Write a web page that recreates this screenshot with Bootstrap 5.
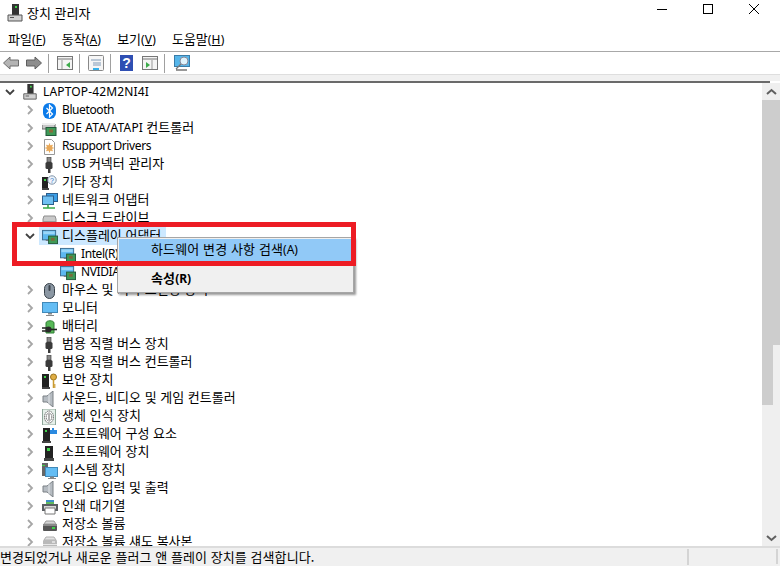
<!DOCTYPE html>
<html lang="ko">
<head>
<meta charset="utf-8">
<title>장치 관리자</title>
<link href="https://cdn.jsdelivr.net/npm/bootstrap@5.3.0/dist/css/bootstrap.min.css" rel="stylesheet">
<style>
html,body{height:100%;overflow:hidden}
body{background:#fff;color:#000;font-family:"Noto Sans CJK KR","Noto Sans",sans-serif;font-size:13px;line-height:18px}
.lat{font-family:"Noto Sans","Noto Sans CJK KR",sans-serif;font-size:12px;letter-spacing:-.4px}
.lat.caps{letter-spacing:.15px}
.win{width:780px;height:566px;position:relative;overflow:hidden}
.ttl{height:27px;padding-left:7px;padding-bottom:2px}
.ttl svg{width:16px;height:18px;margin-right:4px}
.wbtn{width:46px;height:25px}
.wgroup{margin-left:auto;margin-right:-2px}
.mbar{height:24px;padding-left:8px;gap:16px;border-bottom:1px solid #a8a8a8;margin-top:1px}
.mbar span{white-space:nowrap}
.mbar .lat{letter-spacing:.15px}
.tbar{height:22px;padding-left:3px}
.tbar svg{flex:none}
.tsep{width:1px;height:19px;background:#a0a0a0;flex:none}
.g6{margin-left:6px}.g7{margin-left:7px}.g8{margin-left:8px}.g9{margin-left:9px}
.strip{height:7px;background:#f0f0f0;border-top:1px solid #dedede}
.rule{height:2px;background:#6a6a6a;width:770px;flex:none}
.body-wrap{height:463px;min-height:0}
.tree{width:759px;overflow:hidden}
.trow{height:18px;white-space:nowrap;position:relative}
.trow svg{flex:none}
.chev{width:10px;height:10px;flex:none;margin-right:7px}
.lv0{padding-left:5px}
.lv1{padding-left:25px}
.lv2{padding-left:60px}
.ico{width:16px;height:16px;margin-right:4px;margin-top:2px}
.lv0 .ico{margin-right:5px;margin-top:0}
.lv2 .ico{margin-right:5px}
.trow > .sel{position:absolute;left:39px;top:0;width:127px;height:18px;background:#cce8ff}
.trow > span{position:relative}
.trow > span:not(.lat){margin-bottom:2px}
.trow > svg{position:relative}
.sbar{width:18px;background:#efefef;position:relative;flex:none}
.sarrow{height:17px}
.sthumb{height:245px;background:#cdcdcd}
.sthumb2{width:11px;height:60px;background:#cdcdcd}
.sarrow-b{margin-top:auto;height:17px}
.stat{height:20px;background:#f0f0f0;border-top:2px solid #dcdcdc;white-space:nowrap;overflow:hidden;font-size:13px}
.stat-text{width:689px;flex:none;overflow:hidden;border-right:2px solid #d4d4d4;height:16px;margin-top:1px;line-height:16px;letter-spacing:.06px}
.stat-end{margin-left:87px;width:2px;height:15px;background:#d4d4d4;margin-top:1px;flex:none}
.redbox{position:absolute;left:12px;top:222px;width:344px;height:44px;border:5px solid #ed1c24;z-index:5;pointer-events:none}
.ctx.dropdown-menu{position:absolute;left:117px;top:237px;width:237px;height:56px;min-width:0;padding:1px;margin:0;background:#f0f0f0;border:1px solid #a6a6a6;border-radius:0;box-shadow:2px 2px 2px rgba(0,0,0,.4);z-index:4;font-size:13px}
.ctx .dropdown-item{padding:0 0 0 32px;height:23px;line-height:20px;color:#000;letter-spacing:.12px}
.ctx .dropdown-item .lat{letter-spacing:0}
.ctx .dropdown-item.active{background:#91c9f7;color:#000}
.ctx .dropdown-item.strong{font-weight:700;height:24px;line-height:18px}
.ctx .dropdown-divider{margin:3px 1px;border-color:#d7d7d7;opacity:1}
</style>
</head>
<body>
<svg width="0" height="0" class="position-absolute">
<defs>
<symbol id="i-pc" viewBox="0 0 16 18"><rect x="5" y="0" width="7" height="11" fill="#333"/><rect x="8" y="2" width="2" height="2" fill="#3fd04a"/><path d="M1 11h14v6H1z" fill="#d2d2d2" stroke="#555"/><rect x="3" y="13" width="4" height="1" fill="#555"/></symbol>
<symbol id="i-bt" viewBox="0 0 16 16"><rect x="1" y="0" width="13" height="16" rx="6" fill="#0b7bea"/><path d="M4.500 5l6 6-3 3V2l3 3-6 6" fill="none" stroke="#fff" stroke-width="1.200"/></symbol>
<symbol id="i-ide" viewBox="0 0 16 16"><path d="M0 3h13v5H0z" fill="#c8c8c8" stroke="#666"/><path d="M0 2h13v2H0z" fill="#eee"/><rect x="4" y="6.500" width="10" height="8" fill="#3e9a57" stroke="#22593a"/><rect x="7" y="8.500" width="4" height="3" fill="#8a6a3a"/></symbol>
<symbol id="i-rs" viewBox="0 0 16 16"><path d="M2.500 .5h7l3 3v12h-10z" fill="#fff" stroke="#999"/><circle cx="7.500" cy="9" r="3" fill="#e8a858"/><path d="M7.500 4.500v9M3.300 9h8.400M4.500 6l6 6M10.500 6l-6 6" stroke="#e8a858" stroke-width="1.200"/></symbol>
<symbol id="i-usb" viewBox="0 0 16 16"><path d="M5 0h4v5H5z" fill="#888" stroke="#444" stroke-width=".7"/><rect x="3.500" y="5" width="7" height="7" rx="1.500" fill="#3a3a3a"/><rect x="6" y="12" width="2.500" height="4" fill="#3a3a3a"/></symbol>
<symbol id="i-oth" viewBox="0 0 16 16"><path d="M0 2h6v11H0z" fill="#222"/><rect x="2" y="4" width="2" height="2" fill="#3fd04a"/><path d="M-1 13h8v2H-1z" fill="#444"/><circle cx="10" cy="5" r="4.200" fill="#eef4fb" stroke="#7f93a8"/><text x="10" y="7.600" font-size="7" text-anchor="middle" fill="#2a70c0" font-family="Liberation Sans">?</text></symbol>
<symbol id="i-net" viewBox="0 0 16 16"><rect x="4.500" y=".5" width="11" height="8" fill="#3b9ee6" stroke="#2c5e8c"/><rect x=".5" y="3" width="11" height="8.500" fill="#6fc0f2" stroke="#2c5e8c"/><path d="M6 11.500v2M1 15h12M6 13v2" stroke="#3aa94a" stroke-width="1.600"/></symbol>
<symbol id="i-dsk" viewBox="0 0 16 16"><path d="M1 8l1-3h11l1 3v5H1z" fill="#c9c9c9" stroke="#8e8e8e"/><path d="M1 10h13v3H1z" fill="#9a9a9a"/></symbol>
<symbol id="i-dpy" viewBox="0 0 17 16"><rect x=".5" y="1" width="14" height="10" fill="#5db8f0" stroke="#3a6c92"/><rect x="1.500" y="2" width="12" height="3" fill="#9ad6f8"/><path d="M4 11h6v1H4z" fill="#666"/><rect x="7" y="7" width="9.500" height="8" fill="#3e9a57" stroke="#22593a"/><rect x="9.500" y="9" width="4" height="3" fill="#7a6a3a"/></symbol>
<symbol id="i-mou" viewBox="0 0 16 16"><rect x="2.500" y=".5" width="10" height="15" rx="5" fill="#8b97a3" stroke="#39424a"/><rect x="6.500" y="2" width="2" height="6" rx="1" fill="#3c444c"/></symbol>
<symbol id="i-mon" viewBox="0 0 16 16"><rect x=".5" y="1.500" width="15" height="10" fill="#64bdf4" stroke="#4189b8"/><path d="M6 12h4v1.500H6zM4 14h8v1H4z" fill="#888"/></symbol>
<symbol id="i-bat" viewBox="0 0 16 16"><path d="M4 4c0-3 8-3 8 0v10H4z" fill="#58b958" stroke="#2f7d34"/><path d="M0 9h5M0 12h5" stroke="#222" stroke-width="1.300"/><circle cx="6.500" cy="10.500" r="3" fill="#2a2a2a"/><path d="M9 10.500h6" stroke="#222" stroke-width="1.600"/></symbol>
<symbol id="i-sec" viewBox="0 0 16 16"><path d="M0 1h7v13H0z" fill="#222"/><rect x="2" y="3" width="2" height="2" fill="#3fd04a"/><path d="M-1 14h9v2H-1z" fill="#444"/><circle cx="11.500" cy="4" r="3" fill="#e0ae45" stroke="#9a7420"/><path d="M11.500 6v9M11.500 12h2M11.500 14h2" stroke="#c99a30" stroke-width="1.500"/></symbol>
<symbol id="i-snd" viewBox="0 0 16 16"><path d="M1 5h4l6-5v16l-6-5H1z" fill="#b6bcc2" stroke="#7a8085"/><path d="M7 2.500v11" stroke="#e4e7ea"/></symbol>
<symbol id="i-bio" viewBox="0 0 16 16"><rect x=".5" y="0" width="13" height="16" fill="#e6f0ea" stroke="#8fa79a"/><ellipse cx="7" cy="8" rx="4.500" ry="6" fill="#fff" stroke="#666" stroke-dasharray="1.500 .5"/><ellipse cx="7" cy="8" rx="2.800" ry="4" fill="none" stroke="#666" stroke-dasharray="1.500 .5"/><path d="M7 5v6" stroke="#666"/></symbol>
<symbol id="i-swc" viewBox="0 0 16 16"><path d="M1 1h7v13H1z" fill="#222"/><rect x="3" y="3" width="2" height="2" fill="#3fd04a"/><path d="M0 14h9v2H0z" fill="#444"/><path d="M8 3h2V1h2v2h3v4H8z" fill="#2a8ae0"/></symbol>
<symbol id="i-swd" viewBox="0 0 16 16"><path d="M3 1h8v12H3z" fill="#222"/><rect x="5" y="3" width="3" height="3" fill="#3fd04a"/><path d="M2 13h10v3H2z" fill="#444"/></symbol>
<symbol id="i-sys" viewBox="0 0 16 16"><path d="M-1 0h7v13h-7z" fill="#666"/><rect x="0" y="2" width="3" height="1" fill="#3fd04a"/><rect x="3.500" y="4.500" width="12" height="9" fill="#64bdf4" stroke="#4189b8"/><path d="M8 13.500h4V15H8zM6 15h8v1H6z" fill="#888"/></symbol>
<symbol id="i-prn" viewBox="0 0 16 16"><path d="M4 1h8v5H4z" fill="#3d8ec9"/><path d="M0 5h16v7H0z" fill="#5b5f63"/><rect x="4" y="3" width="8" height="2" fill="#5fb85f"/><path d="M2 7h12v3H2z" fill="#d8d8d8"/><path d="M3 9h10v6H3z" fill="#fff" stroke="#777"/></symbol>
<symbol id="i-sto" viewBox="0 0 16 16"><path d="M2 7l2-3h8l2 3z" fill="#d5d5d5" stroke="#9a9a9a"/><rect x="1" y="7" width="14" height="7" rx="1" fill="#555"/><rect x="1" y="7" width="14" height="2" fill="#8a8a8a"/><rect x="10" y="10" width="3" height="2" fill="#3fd04a"/></symbol>
<symbol id="i-sha" viewBox="0 0 16 16"><path d="M2 5l2-3h8l2 3z" fill="#e2e2e2" stroke="#b0b0b0"/><rect x="1" y="5" width="14" height="10" rx="1" fill="#b9b9b9"/><rect x="1" y="9" width="14" height="1" fill="#e8e8e8"/><rect x="10" y="6" width="3" height="2" fill="#ddd"/></symbol>
<symbol id="c-r" viewBox="0 0 10 10"><path d="M3 1l4 4-4 4" fill="none" stroke="#a6a6a6" stroke-width="1.800"/></symbol>
<symbol id="c-d" viewBox="0 0 10 10"><path d="M1 3l4 4 4-4" fill="none" stroke="#404040" stroke-width="1.800"/></symbol>
</defs>
</svg>

<div class="win d-flex flex-column">
  <div class="ttl d-flex align-items-center">
    <svg><use href="#i-pc"/></svg>
    <span>장치 관리자</span>
    <div class="wgroup d-flex">
      <div class="wbtn d-flex align-items-center justify-content-center"><svg width="10" height="10"><path d="M0 5.500h10" stroke="#000"/></svg></div>
      <div class="wbtn d-flex align-items-center justify-content-center"><svg width="10" height="10"><rect x=".5" y=".5" width="9" height="9" fill="none" stroke="#000"/></svg></div>
      <div class="wbtn d-flex align-items-center justify-content-center"><svg width="10" height="10"><path d="M0 0l10 10M10 0L0 10" stroke="#000"/></svg></div>
    </div>
  </div>
  <div class="mbar d-flex align-items-center">
    <span>파일<span class="lat">(<u>F</u>)</span></span>
    <span>동작<span class="lat">(<u>A</u>)</span></span>
    <span>보기<span class="lat">(<u>V</u>)</span></span>
    <span>도움말<span class="lat">(<u>H</u>)</span></span>
  </div>
  <div class="tbar d-flex align-items-center">
    <svg width="16" height="14"><path d="M.5 7L7 1v3h8.500v6H7v3z" fill="#b4b4b4" stroke="#6e6e6e"/></svg>
    <svg width="16" height="14" class="g7"><path d="M15.500 7L9 1v3H.5v6H9v3z" fill="#8e8e8e" stroke="#5e5e5e"/></svg>
    <div class="tsep g6"></div>
    <svg width="16" height="14" class="g8"><rect x=".5" y=".5" width="15" height="13" fill="#f4f4f4" stroke="#777"/><path d="M1 3h14" stroke="#777"/><path d="M5 4v9" stroke="#999"/><path d="M13 6l-4 3 4 3z" fill="#3caa4a"/></svg>
    <div class="tsep g6"></div>
    <svg width="16" height="16" class="g8"><rect x=".5" y=".5" width="15" height="15" rx="1" fill="#f6f6f6" stroke="#888"/><path d="M3 5h10M5 8h8M5 10h8" stroke="#7f99b6"/><rect x="5" y="13" width="6" height="2" fill="#35b0ea"/></svg>
    <div class="tsep g6"></div>
    <svg width="13" height="16" class="g9"><rect width="13" height="16" fill="#2f4fb3"/><text x="6.500" y="13" font-size="14" font-weight="700" text-anchor="middle" fill="#fff" font-family="Liberation Sans">?</text></svg>
    <svg width="16" height="14" class="g9"><rect x=".5" y=".5" width="15" height="13" fill="#f4f4f4" stroke="#777"/><path d="M1 3h14" stroke="#777"/><path d="M10 4v9" stroke="#999"/><path d="M4 6l4 3-4 3z" fill="#3caa4a"/></svg>
    <div class="tsep g6"></div>
    <svg width="16" height="16" class="g9"><rect x=".5" y=".5" width="15" height="11" fill="#56b6ea" stroke="#3a7ca8"/><circle cx="10" cy="6" r="4" fill="#dff3fc" stroke="#889"/><path d="M7 9l-5 5M2 15h11" stroke="#777" stroke-width="1.300"/></svg>
  </div>
  <div class="strip"></div>
  <div class="rule"></div>
  <div class="body-wrap d-flex flex-grow-1">
    <div class="tree flex-grow-1">
      <div class="trow lv0 d-flex align-items-center"><svg class="chev"><use href="#c-d"/></svg><svg class="ico"><use href="#i-pc"/></svg><span class="lat caps">LAPTOP-42M2NI4I</span></div>
      <div class="trow lv1 d-flex align-items-center"><svg class="chev"><use href="#c-r"/></svg><svg class="ico"><use href="#i-bt"/></svg><span class="lat">Bluetooth</span></div>
      <div class="trow lv1 d-flex align-items-center"><svg class="chev"><use href="#c-r"/></svg><svg class="ico"><use href="#i-ide"/></svg><span><span class="lat caps">IDE ATA/ATAPI </span>컨트롤러</span></div>
      <div class="trow lv1 d-flex align-items-center"><svg class="chev"><use href="#c-r"/></svg><svg class="ico"><use href="#i-rs"/></svg><span class="lat">Rsupport Drivers</span></div>
      <div class="trow lv1 d-flex align-items-center"><svg class="chev"><use href="#c-r"/></svg><svg class="ico"><use href="#i-usb"/></svg><span><span class="lat caps">USB </span>커넥터 관리자</span></div>
      <div class="trow lv1 d-flex align-items-center"><svg class="chev"><use href="#c-r"/></svg><svg class="ico"><use href="#i-oth"/></svg><span>기타 장치</span></div>
      <div class="trow lv1 d-flex align-items-center"><svg class="chev"><use href="#c-r"/></svg><svg class="ico"><use href="#i-net"/></svg><span>네트워크 어댑터</span></div>
      <div class="trow lv1 d-flex align-items-center"><svg class="chev"><use href="#c-r"/></svg><svg class="ico"><use href="#i-dsk"/></svg><span>디스크 드라이브</span></div>
      <div class="trow lv1 d-flex align-items-center"><div class="sel"></div><svg class="chev"><use href="#c-d"/></svg><svg class="ico"><use href="#i-dpy"/></svg><span>디스플레이 어댑터</span></div>
      <div class="trow lv2 d-flex align-items-center"><svg class="ico"><use href="#i-dpy"/></svg><span class="lat">Intel(R) UHD Graphics</span></div>
      <div class="trow lv2 d-flex align-items-center"><svg class="ico"><use href="#i-dpy"/></svg><span class="lat">NVIDIA GeForce</span></div>
      <div class="trow lv1 d-flex align-items-center"><svg class="chev"><use href="#c-r"/></svg><svg class="ico"><use href="#i-mou"/></svg><span>마우스 및 기타 포인팅 장치</span></div>
      <div class="trow lv1 d-flex align-items-center"><svg class="chev"><use href="#c-r"/></svg><svg class="ico"><use href="#i-mon"/></svg><span>모니터</span></div>
      <div class="trow lv1 d-flex align-items-center"><svg class="chev"><use href="#c-r"/></svg><svg class="ico"><use href="#i-bat"/></svg><span>배터리</span></div>
      <div class="trow lv1 d-flex align-items-center"><svg class="chev"><use href="#c-r"/></svg><svg class="ico"><use href="#i-usb"/></svg><span>범용 직렬 버스 장치</span></div>
      <div class="trow lv1 d-flex align-items-center"><svg class="chev"><use href="#c-r"/></svg><svg class="ico"><use href="#i-usb"/></svg><span>범용 직렬 버스 컨트롤러</span></div>
      <div class="trow lv1 d-flex align-items-center"><svg class="chev"><use href="#c-r"/></svg><svg class="ico"><use href="#i-sec"/></svg><span>보안 장치</span></div>
      <div class="trow lv1 d-flex align-items-center"><svg class="chev"><use href="#c-r"/></svg><svg class="ico"><use href="#i-snd"/></svg><span>사운드, 비디오 및 게임 컨트롤러</span></div>
      <div class="trow lv1 d-flex align-items-center"><svg class="chev"><use href="#c-r"/></svg><svg class="ico"><use href="#i-bio"/></svg><span>생체 인식 장치</span></div>
      <div class="trow lv1 d-flex align-items-center"><svg class="chev"><use href="#c-r"/></svg><svg class="ico"><use href="#i-swc"/></svg><span>소프트웨어 구성 요소</span></div>
      <div class="trow lv1 d-flex align-items-center"><svg class="chev"><use href="#c-r"/></svg><svg class="ico"><use href="#i-swd"/></svg><span>소프트웨어 장치</span></div>
      <div class="trow lv1 d-flex align-items-center"><svg class="chev"><use href="#c-r"/></svg><svg class="ico"><use href="#i-sys"/></svg><span>시스템 장치</span></div>
      <div class="trow lv1 d-flex align-items-center"><svg class="chev"><use href="#c-r"/></svg><svg class="ico"><use href="#i-snd"/></svg><span>오디오 입력 및 출력</span></div>
      <div class="trow lv1 d-flex align-items-center"><svg class="chev"><use href="#c-r"/></svg><svg class="ico"><use href="#i-prn"/></svg><span>인쇄 대기열</span></div>
      <div class="trow lv1 d-flex align-items-center"><svg class="chev"><use href="#c-r"/></svg><svg class="ico"><use href="#i-sto"/></svg><span>저장소 볼륨</span></div>
      <div class="trow lv1 d-flex align-items-center"><svg class="chev"><use href="#c-r"/></svg><svg class="ico"><use href="#i-sha"/></svg><span>저장소 볼륨 섀도 복사본</span></div>
    </div>
    <div class="sbar d-flex flex-column">
      <div class="sarrow d-flex align-items-center justify-content-center"><svg width="11" height="8"><path d="M1 6l4.500-4 4.500 4" fill="none" stroke="#606060" stroke-width="2"/></svg></div>
      <div class="sthumb"></div>
      <div class="sthumb2"></div>
      <div class="sarrow-b d-flex align-items-center justify-content-center"><svg width="11" height="8"><path d="M1 2l4.500 4 4.500-4" fill="none" stroke="#606060" stroke-width="2"/></svg></div>
    </div>
  </div>
  <div class="stat d-flex">
    <div class="stat-text">변경되었거나 새로운 플러그 앤 플레이 장치를 검색합니다.</div>
    <div class="stat-end"></div>
  </div>
  <div class="dropdown-menu show ctx">
    <a class="dropdown-item active" href="#">하드웨어 변경 사항 검색<span class="lat">(A)</span></a>
    <hr class="dropdown-divider">
    <a class="dropdown-item strong" href="#">속성<span class="lat fw-bold">(R)</span></a>
  </div>
  <div class="redbox"></div>
</div>
<script src="https://cdn.jsdelivr.net/npm/bootstrap@5.3.0/dist/js/bootstrap.bundle.min.js"></script>
</body>
</html>
